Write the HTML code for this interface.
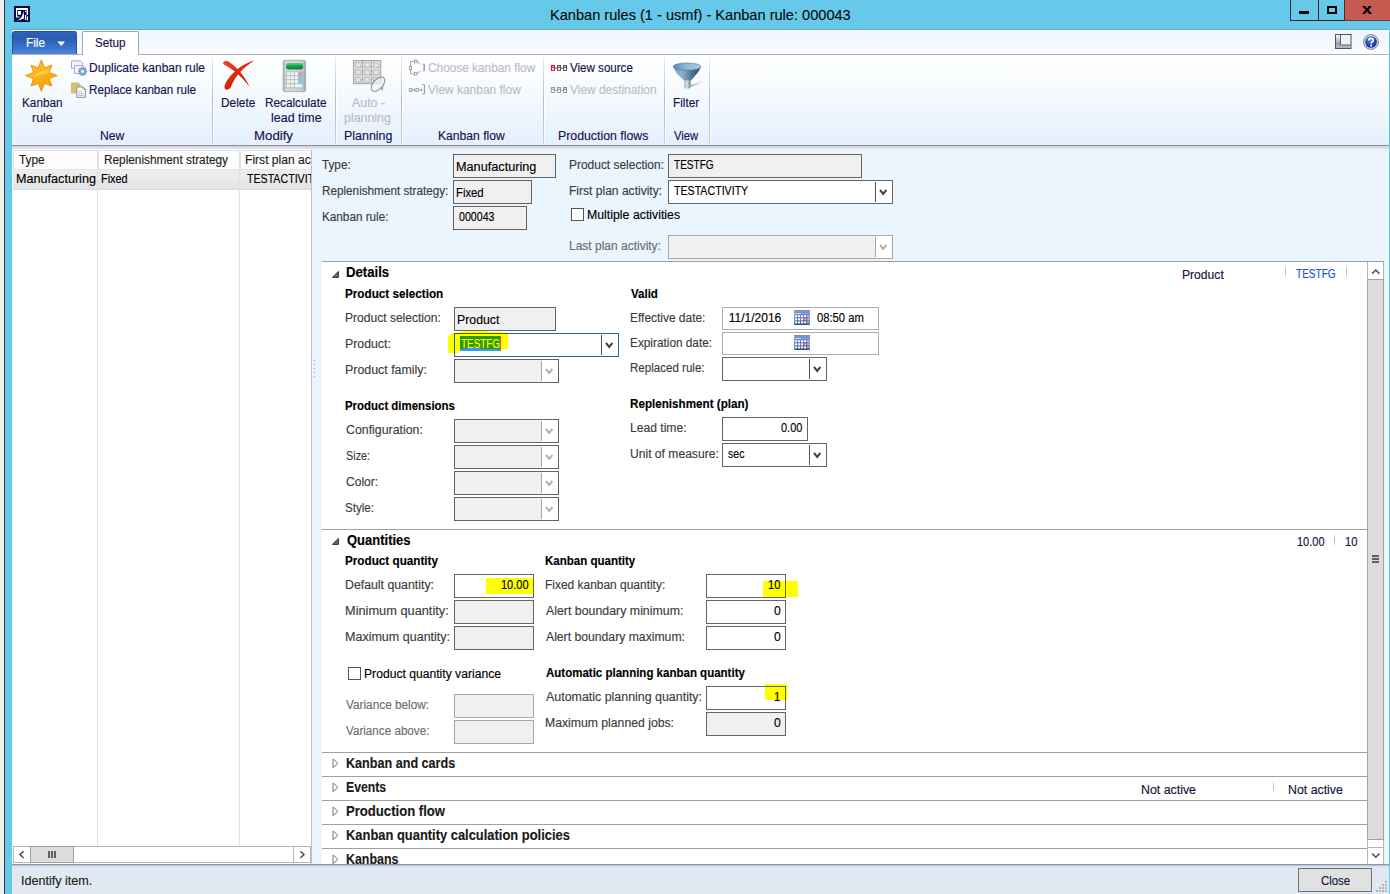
<!DOCTYPE html>
<html><head><meta charset="utf-8"><title>Kanban rules</title><style>html,body{margin:0;padding:0;}body{width:1390px;height:894px;overflow:hidden;position:relative;background:#67c9ea;font-family:"Liberation Sans",sans-serif;}#r{position:absolute;left:0;top:0;width:1390px;height:894px;overflow:hidden;}#r div,#r svg,#r span{position:absolute;}#r span{white-space:nowrap;transform-origin:0 0;line-height:16px;height:16px;-webkit-text-stroke:0.15px currentColor;}</style></head><body><div id="r">
<div style="left:0px;top:0px;width:4px;height:894px;background:#eeeeee;"></div>
<div style="left:4px;top:0px;width:1px;height:894px;background:#3a3a3a;"></div>
<div style="left:5px;top:0px;width:1385px;height:894px;background:#67c9ea;"></div>
<div style="left:1290px;top:0px;width:29px;height:21px;box-sizing:border-box;border:1px solid #2b2b2b;border-top:none;"></div>
<div style="left:1318px;top:0px;width:27px;height:21px;box-sizing:border-box;border:1px solid #2b2b2b;border-top:none;"></div>
<div style="left:1345px;top:0px;width:45px;height:21px;background:#c55a50;"></div>
<div style="left:1345px;top:20px;width:45px;height:1px;background:#703832;"></div>
<div style="left:1344px;top:0px;width:1px;height:21px;background:#4a2a28;"></div>
<div style="left:1299px;top:11px;width:10px;height:3px;background:#000;"></div>
<div style="left:1327px;top:6px;width:10px;height:8px;box-sizing:border-box;border:2px solid #000;"></div>
<svg style="left:14px;top:6px" width="16" height="16" viewBox="0 0 16 16">
<rect width="16" height="16" fill="#000a46"/>
<path d="M2 2 H14 V9 H12.6 V4 H3.2 V10.4 H5.4 V11.6 H2 Z" fill="#fff"/>
<rect x="4" y="5" width="3" height="3.8" fill="#fff"/>
<path d="M2.8 14.6 C6 13.6 8.8 10.5 9.6 4.8 L10.2 12.6 C8 13 5 14.6 2.8 14.6 Z" fill="#fff"/>
<rect x="11" y="9" width="1.2" height="5" fill="#fff"/><rect x="12.9" y="10.4" width="1.1" height="4" fill="#fff"/>
<rect x="11" y="4.8" width="1.2" height="1.2" fill="#fff"/>
</svg>
<div style="left:12px;top:29px;width:1377px;height:1px;background:#6ea6c6;"></div>
<div style="left:12px;top:30px;width:1377px;height:25px;background:linear-gradient(#f8fbff 0px,#edf5fd 2px,#f2f8fe 50%,#fcfdff 100%);"></div>
<div style="left:12px;top:54px;width:1377px;height:1px;background:#a9b0b9;"></div>
<div style="left:12px;top:31px;width:65px;height:23px;background:linear-gradient(#2d62b8 0%,#2a5db2 30%,#3a72cc 70%,#4c88de 100%);border-radius:3px 3px 0 0;box-sizing:border-box;border:1px solid #2450a0;border-bottom:none;"></div>
<svg style="left:57px;top:41px" width="9" height="6" viewBox="0 0 9 6"><path d="M0.4 0.6 H8 L4.2 5 Z" fill="#fff"/></svg>
<div style="left:82px;top:31px;width:57px;height:25px;background:#fff;box-sizing:border-box;border:1px solid #9fa6af;border-bottom:none;border-radius:2px 2px 0 0;"></div>
<svg style="left:1335px;top:34px" width="17" height="16" viewBox="0 0 17 16">
<defs><linearGradient id="lg1" x1="0" x2="0" y1="0" y2="1"><stop offset="0" stop-color="#fafafa"/><stop offset="1" stop-color="#8e949c"/></linearGradient></defs>
<rect x="0.5" y="0.5" width="15.5" height="14" fill="#f0f0f0" stroke="#4d5560"/>
<rect x="1" y="1" width="4" height="10" fill="url(#lg1)"/>
<rect x="1" y="11" width="14.5" height="3" fill="#aeb4bc"/>
<path d="M5.5 1 V11 H16" stroke="#5a626c" fill="none"/>
</svg>
<svg style="left:1363px;top:34px" width="16" height="16" viewBox="0 0 18 18">
<defs><radialGradient id="hg" cx="0.4" cy="0.3" r="0.8"><stop offset="0" stop-color="#5a8ae6"/><stop offset="0.6" stop-color="#1f44b0"/><stop offset="1" stop-color="#12307e"/></radialGradient></defs>
<circle cx="9" cy="9" r="8.3" fill="#e4e4e4" stroke="#7a7a7a" stroke-width="1.1"/>
<circle cx="9" cy="9" r="6.6" fill="url(#hg)"/>
<path d="M6.6 7.2 C6.6 4.2 11.6 4.2 11.6 7 C11.6 8.8 9.2 8.8 9.2 10.8" stroke="#fff" stroke-width="2" fill="none"/>
<rect x="8.2" y="12" width="2" height="2" fill="#fff"/>
</svg>
<div style="left:12px;top:55px;width:1377px;height:91px;background:linear-gradient(#ffffff 0%,#f7fbfe 35%,#ebf4fd 75%,#e3f0fc 100%);"></div>
<div style="left:12px;top:145px;width:1377px;height:1px;background:#8a9199;"></div>
<div style="left:12px;top:146px;width:1377px;height:3px;background:linear-gradient(#cdd1d6,#e4e9ef);"></div>
<div style="left:12px;top:149px;width:1377px;height:1px;background:#ebf5fe;"></div>
<div style="left:212px;top:57px;width:1px;height:87px;background:linear-gradient(rgba(190,198,208,0.3),#b4bcc7 50%,rgba(180,188,199,0.6));"></div>
<div style="left:213px;top:57px;width:1px;height:87px;background:rgba(255,255,255,0.7);"></div>
<div style="left:335px;top:57px;width:1px;height:87px;background:linear-gradient(rgba(190,198,208,0.3),#b4bcc7 50%,rgba(180,188,199,0.6));"></div>
<div style="left:336px;top:57px;width:1px;height:87px;background:rgba(255,255,255,0.7);"></div>
<div style="left:401px;top:57px;width:1px;height:87px;background:linear-gradient(rgba(190,198,208,0.3),#b4bcc7 50%,rgba(180,188,199,0.6));"></div>
<div style="left:402px;top:57px;width:1px;height:87px;background:rgba(255,255,255,0.7);"></div>
<div style="left:543px;top:57px;width:1px;height:87px;background:linear-gradient(rgba(190,198,208,0.3),#b4bcc7 50%,rgba(180,188,199,0.6));"></div>
<div style="left:544px;top:57px;width:1px;height:87px;background:rgba(255,255,255,0.7);"></div>
<div style="left:664px;top:57px;width:1px;height:87px;background:linear-gradient(rgba(190,198,208,0.3),#b4bcc7 50%,rgba(180,188,199,0.6));"></div>
<div style="left:665px;top:57px;width:1px;height:87px;background:rgba(255,255,255,0.7);"></div>
<div style="left:709px;top:57px;width:1px;height:87px;background:linear-gradient(rgba(190,198,208,0.3),#b4bcc7 50%,rgba(180,188,199,0.6));"></div>
<div style="left:710px;top:57px;width:1px;height:87px;background:rgba(255,255,255,0.7);"></div>
<svg style="left:24px;top:58px" width="36" height="36" viewBox="24 58 36 36">
<defs><linearGradient id="sg" x1="0.2" y1="0" x2="0.8" y2="1"><stop offset="0" stop-color="#ffc52e"/><stop offset="0.45" stop-color="#fdb416"/><stop offset="1" stop-color="#f49a04"/></linearGradient>
<linearGradient id="sh" x1="0" y1="1" x2="1" y2="0"><stop offset="0" stop-color="#fff" stop-opacity="0"/><stop offset="0.5" stop-color="#fff36a" stop-opacity="0.55"/><stop offset="1" stop-color="#fff" stop-opacity="0"/></linearGradient></defs>
<path d="M38.19 67.84 Q39.29 65.21 41.40 59.80 Q43.51 65.21 44.61 67.84 Q47.26 66.76 51.87 65.13 Q50.24 69.74 49.16 72.39 Q51.79 73.49 57.20 75.60 Q51.79 77.71 49.16 78.81 Q50.24 81.46 51.87 86.07 Q47.26 84.44 44.61 83.36 Q43.51 85.99 41.40 91.40 Q39.29 85.99 38.19 83.36 Q35.54 84.44 30.93 86.07 Q32.56 81.46 33.64 78.81 Q31.01 77.71 25.60 75.60 Q31.01 73.49 33.64 72.39 Q32.56 69.74 30.93 65.13 Q35.54 66.76 38.19 67.84 Z" fill="url(#sg)" stroke="#dc8e0a" stroke-width="0.9" stroke-linejoin="round"/>
<path d="M33.4 76 C37 72.6 44 69.6 50.4 68.4 C50.8 70 50.6 71.4 50 72.6 C44 73.4 38 75.6 33.8 78.4 Z" fill="url(#sh)"/>
</svg>
<svg style="left:70px;top:59px" width="18" height="18" viewBox="70 59 18 18">
<path d="M71.5 60.9 H80.4 L82.6 63 V68.3 H71.5 Z" fill="#f3f5fb" stroke="#aaa8d6"/>
<path d="M74.6 65.6 H83 L85 67.6 V73.5 H74.6 Z" fill="#f6f8fc" stroke="#aaa8d6"/>
<circle cx="82.6" cy="71.4" r="3.7" fill="#86abcc" stroke="#6f97bd" stroke-width="1.8" stroke-dasharray="1.2 1.0"/>
<circle cx="82.6" cy="71.4" r="1.4" fill="#f4f8fc"/>
</svg>
<svg style="left:70px;top:81px" width="18" height="18" viewBox="70 81 18 18">
<defs><pattern id="hp" width="2.4" height="2.4" patternUnits="userSpaceOnUse" patternTransform="rotate(-45)"><rect width="2.4" height="2.4" fill="#b9b69a"/><rect width="2.4" height="1.1" fill="#e6d24e"/></pattern></defs>
<path d="M71 82.4 H78.4 L80.6 84.6 V93.6 H71 Z" fill="url(#hp)"/>
<path d="M76.8 86.9 H83 L85.4 89.3 V97.3 H76.8 Z" fill="#fff" stroke="#8c8c8c"/>
<path d="M83 86.9 V89.3 H85.4" fill="none" stroke="#8c8c8c" stroke-width="0.8"/>
<path d="M78.3 91.4 H81.8 M78.3 93.4 H83.8 M78.3 95.4 H83.8" stroke="#9fb2cc" stroke-width="0.9"/>
</svg>
<svg style="left:221px;top:59px" width="36" height="33" viewBox="221 59 36 33">
<defs><linearGradient id="rx" x1="0" x2="1" y1="0" y2="1"><stop offset="0" stop-color="#ee4a30"/><stop offset="0.5" stop-color="#d82408"/><stop offset="1" stop-color="#c41c04"/></linearGradient></defs>
<path d="M223.2 62.6 C224.6 60.6 227.6 60.8 229.6 62.2 C237.4 67.6 245 76.8 249.9 87.2 C243.4 78.6 235.6 71 226 65.8 C224 64.8 222.6 63.8 223.2 62.6 Z" fill="url(#rx)"/>
<path d="M254.4 60.6 C243 63.6 232.6 72 227.4 80 C224.6 84.2 223.6 88 225.6 89.4 C228.2 90.8 230.6 88.4 231.6 85.6 C234.6 77.4 243 67.6 254.4 60.6 Z" fill="url(#rx)"/>
</svg>
<svg style="left:282px;top:59px" width="25" height="34" viewBox="282 59 25 34"><defs><linearGradient id="cb" x1="0" x2="1"><stop offset="0" stop-color="#aab2b8"/><stop offset="0.15" stop-color="#d8dde0"/><stop offset="0.85" stop-color="#c9cfd3"/><stop offset="1" stop-color="#98a1a8"/></linearGradient><linearGradient id="cg" x1="0" x2="0" y1="0" y2="1"><stop offset="0" stop-color="#5fd28a"/><stop offset="0.5" stop-color="#12a04a"/><stop offset="1" stop-color="#0a8038"/></linearGradient></defs><rect x="283.2" y="60.3" width="22.4" height="31.3" rx="1.6" fill="url(#cb)" stroke="#98a0a6" stroke-width="0.8"/><rect x="286.1" y="63" width="16.9" height="6.4" rx="1.8" fill="url(#cg)"/><rect x="285.8" y="71.4" width="17.4" height="17" fill="#b4bcc2"/><rect x="286.7" y="72.2" width="3.2" height="3" fill="#f4f4f4"/><rect x="290.7" y="72.2" width="3.2" height="3" fill="#f4f4f4"/><rect x="294.7" y="72.2" width="3.2" height="3" fill="#f4f4f4"/><rect x="298.8" y="72.2" width="3.2" height="3" fill="#f08a9a"/><rect x="286.7" y="76.2" width="3.2" height="3" fill="#f4f4f4"/><rect x="290.7" y="76.2" width="3.2" height="3" fill="#f4f4f4"/><rect x="294.7" y="76.2" width="3.2" height="3" fill="#f4f4f4"/><rect x="298.8" y="76.2" width="3.2" height="3" fill="#6ed0ee"/><rect x="286.7" y="80.2" width="3.2" height="3" fill="#f4f4f4"/><rect x="290.7" y="80.2" width="3.2" height="3" fill="#f4f4f4"/><rect x="294.7" y="80.2" width="3.2" height="3" fill="#f4f4f4"/><rect x="298.8" y="80.2" width="3.2" height="3" fill="#6ed0ee"/><rect x="286.7" y="84.3" width="3.2" height="3" fill="#f4f4f4"/><rect x="290.7" y="84.3" width="3.2" height="3" fill="#f4f4f4"/><rect x="294.7" y="84.3" width="7.3" height="3" fill="#f4f4f4"/></svg>
<svg style="left:351px;top:58px" width="36" height="36" viewBox="351 58 36 36"><rect x="353.4" y="60.5" width="27.4" height="23.2" fill="#dcdcdc" stroke="#a4a4a4"/><path d="M362.4 61 V83" stroke="#a0a0a0" stroke-dasharray="3 1.2"/><path d="M371.4 61 V83" stroke="#a0a0a0" stroke-dasharray="3 1.2"/><path d="M355.6 62.6 H358.8 C360.8 63.2 361.0 65.0 361.0 67.2 H355.6 Z" fill="#e6e6e6" stroke="#b0b0b0" stroke-width="0.8"/><path d="M364.6 62.6 H367.8 C369.8 63.2 370.0 65.0 370.0 67.2 H364.6 Z" fill="#e6e6e6" stroke="#b0b0b0" stroke-width="0.8"/><path d="M373.6 62.6 H376.8 C378.8 63.2 379.0 65.0 379.0 67.2 H373.6 Z" fill="#e6e6e6" stroke="#b0b0b0" stroke-width="0.8"/><path d="M355.6 70.0 H358.8 C360.8 70.6 361.0 72.4 361.0 74.6 H355.6 Z" fill="#e6e6e6" stroke="#b0b0b0" stroke-width="0.8"/><path d="M364.6 70.0 H367.8 C369.8 70.6 370.0 72.4 370.0 74.6 H364.6 Z" fill="#e6e6e6" stroke="#b0b0b0" stroke-width="0.8"/><path d="M373.6 70.0 H376.8 C378.8 70.6 379.0 72.4 379.0 74.6 H373.6 Z" fill="#e6e6e6" stroke="#b0b0b0" stroke-width="0.8"/><path d="M355.6 77.4 H358.8 C360.8 78.0 361.0 79.80000000000001 361.0 82.0 H355.6 Z" fill="#e6e6e6" stroke="#b0b0b0" stroke-width="0.8"/><path d="M364.6 77.4 H367.8 C369.8 78.0 370.0 79.80000000000001 370.0 82.0 H364.6 Z" fill="#e6e6e6" stroke="#b0b0b0" stroke-width="0.8"/><path d="M373.6 77.4 H376.8 C378.8 78.0 379.0 79.80000000000001 379.0 82.0 H373.6 Z" fill="#e6e6e6" stroke="#b0b0b0" stroke-width="0.8"/><ellipse cx="378" cy="84.2" rx="8.6" ry="4.8" transform="rotate(-48 378 84.2)" fill="#f2f2f2" fill-opacity="0.7" stroke="#9a9a9a" stroke-width="1.2"/><path d="M379 88.4 L383.4 85.6 L383 90.6 Z" fill="#a8a8a8"/></svg>
<svg style="left:408px;top:59px" width="18" height="18" viewBox="408 59 18 18" fill="none" stroke="#9c9c9c" stroke-width="0.9">
<path d="M414 61.2 H410.6 V66.4 M410.6 69.6 V73.8 H414 M417.6 61.2 L420.4 64.4 M417.6 73.8 L420.4 70.6"/>
<rect x="414.4" y="60.2" width="2.6" height="2.6"/><rect x="414.4" y="72.4" width="2.6" height="2.6"/><rect x="409.4" y="66.4" width="2.2" height="3.2"/>
<path d="M422.6 64.2 H424.4 V70.8 H422.6 M423 66.4 H424.4 M423 68.6 H424.4" stroke="#8a8a8a"/>
</svg>
<svg style="left:408px;top:83px" width="18" height="12" viewBox="408 83 18 12" fill="none" stroke="#9c9c9c" stroke-width="0.9">
<rect x="409.4" y="88.6" width="2.4" height="2.8"/><rect x="416" y="88.6" width="2.4" height="2.8"/>
<path d="M411.8 90 H416 M418.4 90 H422.6 M414.4 88.8 L415.8 90 L414.4 91.2 M421 88.8 L422.4 90 L421 91.2"/>
<path d="M422.6 84.6 H424.4 V93.8 H422.6" stroke="#8a8a8a"/>
</svg>
<svg style="left:550px;top:64.1px" width="18" height="8" viewBox="550 64.1 18 8"><path d="M555 68.3 H563.5" stroke="#585858" stroke-width="0.9"/><rect x="550.9" y="65.1" width="4" height="5.9" fill="#e8001c"/><rect x="551.9" y="68.0" width="2" height="2" fill="#fff"/><rect x="551.9" y="66.1" width="2" height="0.9" fill="#fff" opacity="0.75"/><rect x="557" y="65.1" width="4" height="5.9" fill="#585858"/><rect x="558" y="68.0" width="2" height="2" fill="#fff"/><rect x="558" y="66.1" width="2" height="0.9" fill="#fff" opacity="0.75"/><rect x="563" y="65.1" width="4" height="5.9" fill="#585858"/><rect x="564" y="68.0" width="2" height="2" fill="#fff"/><rect x="564" y="66.1" width="2" height="0.9" fill="#fff" opacity="0.75"/></svg>
<svg style="left:550px;top:86.1px" width="18" height="8" viewBox="550 86.1 18 8"><path d="M555 90.3 H563.5" stroke="#9a9a9a" stroke-width="0.9"/><rect x="550.9" y="87.1" width="4" height="5.9" fill="#9a9a9a"/><rect x="551.9" y="90.0" width="2" height="2" fill="#fff"/><rect x="551.9" y="88.1" width="2" height="0.9" fill="#fff" opacity="0.75"/><rect x="557" y="87.1" width="4" height="5.9" fill="#9a9a9a"/><rect x="558" y="90.0" width="2" height="2" fill="#fff"/><rect x="558" y="88.1" width="2" height="0.9" fill="#fff" opacity="0.75"/><rect x="563" y="87.1" width="4" height="5.9" fill="#8a8a8a"/><rect x="564" y="90.0" width="2" height="2" fill="#fff"/><rect x="564" y="88.1" width="2" height="0.9" fill="#fff" opacity="0.75"/></svg>
<svg style="left:671px;top:61px" width="36" height="30" viewBox="671 61 36 30">
<defs><linearGradient id="fc" x1="0" x2="1"><stop offset="0" stop-color="#7fa8c8"/><stop offset="0.35" stop-color="#86aecc"/><stop offset="0.7" stop-color="#4f6f88"/><stop offset="1" stop-color="#3a5266"/></linearGradient>
<linearGradient id="ft" x1="0" x2="1"><stop offset="0" stop-color="#5e88aa"/><stop offset="0.5" stop-color="#8dbbdc"/><stop offset="1" stop-color="#a8cfea"/></linearGradient>
<linearGradient id="fs" x1="0" x2="1"><stop offset="0" stop-color="#88aac4"/><stop offset="0.4" stop-color="#dbe8f2"/><stop offset="1" stop-color="#5d7f98"/></linearGradient>
<linearGradient id="fsh" x1="0" x2="1"><stop offset="0" stop-color="#8a8f96" stop-opacity="0.7"/><stop offset="1" stop-color="#8a8f96" stop-opacity="0"/></linearGradient></defs>
<path d="M691 85 L703 80.4 L703 82.6 L691 87 Z" fill="url(#fsh)"/>
<path d="M673.2 66.8 C675 73 681 77 684.2 80.8 H690.8 C694 77 699.4 72 700.8 66.8 Z" fill="url(#fc)"/>
<ellipse cx="687" cy="66.6" rx="13.8" ry="3.6" fill="url(#ft)" stroke="#5a7a94" stroke-width="0.7"/>
<path d="M684.4 80.6 H690.6 V87.8 C689 89 686 89 684.4 87.8 Z" fill="url(#fs)"/>
</svg>
<div style="left:12px;top:150px;width:1377px;height:715px;background:#ebf5fe;"></div>
<div style="left:12px;top:149px;width:299px;height:715px;background:#fff;"></div>
<div style="left:13px;top:150px;width:85px;height:20px;background:linear-gradient(#ffffff,#fbfbfb);box-sizing:border-box;border:1px solid #e0e0e0;"></div>
<div style="left:98px;top:150px;width:142px;height:20px;background:linear-gradient(#ffffff,#fbfbfb);box-sizing:border-box;border:1px solid #e0e0e0;"></div>
<div style="left:240px;top:150px;width:72px;height:20px;background:linear-gradient(#ffffff,#fbfbfb);box-sizing:border-box;border:1px solid #e0e0e0;"></div>
<div style="left:13px;top:169px;width:298px;height:21px;background:linear-gradient(#d9d9d9 0px,#eeeeee 1px,#e9e9e9 60%,#e3e3e3 100%);box-sizing:border-box;border-bottom:1px solid #d2dceb;"></div>
<div style="left:97px;top:170px;width:1px;height:676px;background:#dce5f3;"></div>
<div style="left:239px;top:170px;width:1px;height:676px;background:#dce5f3;"></div>
<div style="left:311px;top:150px;width:1px;height:714px;background:#b4c3d9;"></div>
<div style="left:13px;top:846px;width:298px;height:17px;background:#fff;box-sizing:border-box;border:1px solid #b6b6b6;"></div>
<div style="left:30px;top:846px;width:44px;height:17px;background:#dcdcdc;box-sizing:border-box;border:1px solid #a2a2a2;"></div>
<div style="left:48px;top:851px;width:2px;height:7px;background:#606060;"></div>
<div style="left:51px;top:851px;width:2px;height:7px;background:#606060;"></div>
<div style="left:54px;top:851px;width:2px;height:7px;background:#606060;"></div>
<div style="left:293px;top:847px;width:1px;height:15px;background:#b6b6b6;"></div>
<svg style="left:17px;top:849px" width="10" height="12" viewBox="0 0 10 12"><path d="M6.6 2.2 L3 5.6 L6.6 9" fill="none" stroke="#505050" stroke-width="1.5"/></svg>
<svg style="left:297px;top:849px" width="10" height="12" viewBox="0 0 10 12"><path d="M3.4 2.2 L7 5.6 L3.4 9" fill="none" stroke="#505050" stroke-width="1.5"/></svg>
<span style="left:19.40px;top:152px;font-size:12px;color:#1e1e1e;transform:scaleX(0.9885);">Type</span>
<span style="left:103.52px;top:152px;font-size:12px;color:#1e1e1e;transform:scaleX(0.9832);">Replenishment strategy</span>
<span style="left:245.39px;top:152px;font-size:12px;color:#1e1e1e;transform:scaleX(1.0068);">First plan activity</span>
<span style="left:15.55px;top:171px;font-size:12px;color:#000000;transform:scaleX(1.0514);">Manufacturing</span>
<span style="left:100.69px;top:171px;font-size:12px;color:#000000;transform:scaleX(0.9071);">Fixed</span>
<span style="left:246.90px;top:171px;font-size:12px;color:#000000;transform:scaleX(0.8857);">TESTACTIVITY</span>
<div style="left:311px;top:150px;width:1px;height:714px;background:#b4c3d9;"></div>
<div style="left:312px;top:150px;width:1077px;height:714px;background:#ebf5fe;"></div>
<div style="left:314px;top:360px;width:1px;height:1px;background:#8d9db5;"></div>
<div style="left:314px;top:364px;width:1px;height:1px;background:#8d9db5;"></div>
<div style="left:314px;top:368px;width:1px;height:1px;background:#8d9db5;"></div>
<div style="left:314px;top:372px;width:1px;height:1px;background:#8d9db5;"></div>
<div style="left:314px;top:376px;width:1px;height:1px;background:#8d9db5;"></div>
<div style="left:453px;top:154px;width:103px;height:24px;background:#f0f0f0;border:1px solid #646464;box-sizing:border-box;"></div>
<div style="left:453px;top:180px;width:79px;height:24px;background:#f0f0f0;border:1px solid #646464;box-sizing:border-box;"></div>
<div style="left:453px;top:206px;width:74px;height:24px;background:#f0f0f0;border:1px solid #646464;box-sizing:border-box;"></div>
<div style="left:668px;top:154px;width:194px;height:24px;background:#f0f0f0;border:1px solid #646464;box-sizing:border-box;"></div>
<div style="left:668px;top:180px;width:225px;height:24px;background:#ffffff;border:1px solid #646464;box-sizing:border-box;"></div>
<div style="left:875px;top:182px;width:1px;height:20px;background:#555555;"></div>
<svg style="left:878.4px;top:188.25px" width="10.4" height="7.9" viewBox="-2 -2 10.4 7.9"><path d="M0 0 L3.2 3.9 L6.4 0" fill="none" stroke="#404040" stroke-width="2" stroke-linejoin="miter"/></svg>
<div style="left:571px;top:208px;width:13px;height:13px;background:#fff;box-sizing:border-box;border:1px solid #555;"></div>
<div style="left:668px;top:235px;width:225px;height:24px;background:#f0f0f0;border:1px solid #a8a8a8;box-sizing:border-box;"></div>
<div style="left:875px;top:236px;width:17px;height:22px;background:#ffffff;"></div>
<div style="left:875px;top:237px;width:1px;height:20px;background:#a2a8ae;"></div>
<svg style="left:878.4px;top:243.25px" width="10.4" height="7.9" viewBox="-2 -2 10.4 7.9"><path d="M0 0 L3.2 3.9 L6.4 0" fill="none" stroke="#b2b2b2" stroke-width="2" stroke-linejoin="miter"/></svg>
<div style="left:322px;top:262px;width:1045px;height:602px;background:#fff;"></div>
<div style="left:322px;top:261px;width:1045px;height:1px;background:#a0a0a0;"></div>
<div style="left:322px;top:529px;width:1045px;height:1px;background:#a0a0a0;"></div>
<div style="left:322px;top:752px;width:1045px;height:1px;background:#a0a0a0;"></div>
<div style="left:322px;top:776px;width:1045px;height:1px;background:#a0a0a0;"></div>
<div style="left:322px;top:800px;width:1045px;height:1px;background:#a0a0a0;"></div>
<div style="left:322px;top:824px;width:1045px;height:1px;background:#a0a0a0;"></div>
<div style="left:322px;top:848px;width:1045px;height:1px;background:#a0a0a0;"></div>
<div style="left:1367px;top:261px;width:17px;height:1px;background:#a0a0a0;"></div>
<svg style="left:331.8px;top:270.6px" width="8" height="7" viewBox="0 0 8 7"><path d="M6.4 0.4 V6.4 H0.4 Z" fill="#6a6a6a" stroke="#262626" stroke-width="0.9"/></svg>
<svg style="left:331.8px;top:538.4px" width="8" height="7" viewBox="0 0 8 7"><path d="M6.4 0.4 V6.4 H0.4 Z" fill="#6a6a6a" stroke="#262626" stroke-width="0.9"/></svg>
<svg style="left:331.8px;top:758.4px" width="8" height="11" viewBox="0 0 8 11"><path d="M1 1 L6 5.3 L1 9.6 Z" fill="#fff" stroke="#767676" stroke-width="1"/></svg>
<svg style="left:331.8px;top:782.4px" width="8" height="11" viewBox="0 0 8 11"><path d="M1 1 L6 5.3 L1 9.6 Z" fill="#fff" stroke="#767676" stroke-width="1"/></svg>
<svg style="left:331.8px;top:806.4px" width="8" height="11" viewBox="0 0 8 11"><path d="M1 1 L6 5.3 L1 9.6 Z" fill="#fff" stroke="#767676" stroke-width="1"/></svg>
<svg style="left:331.8px;top:830.4px" width="8" height="11" viewBox="0 0 8 11"><path d="M1 1 L6 5.3 L1 9.6 Z" fill="#fff" stroke="#767676" stroke-width="1"/></svg>
<svg style="left:331.8px;top:854.4px" width="8" height="11" viewBox="0 0 8 11"><path d="M1 1 L6 5.3 L1 9.6 Z" fill="#fff" stroke="#767676" stroke-width="1"/></svg>
<div style="left:454px;top:307px;width:102px;height:24px;background:#f0f0f0;border:1px solid #646464;box-sizing:border-box;"></div>
<div style="left:454px;top:333px;width:165px;height:24px;background:#ffffff;border:1px solid #2b6496;box-sizing:border-box;"></div>
<div style="left:601px;top:335px;width:1px;height:20px;background:#555555;"></div>
<svg style="left:604.4px;top:341.25px" width="10.4" height="7.9" viewBox="-2 -2 10.4 7.9"><path d="M0 0 L3.2 3.9 L6.4 0" fill="none" stroke="#404040" stroke-width="2" stroke-linejoin="miter"/></svg>
<div style="left:463px;top:331px;width:24px;height:1px;background:#ffff00;"></div>
<div style="left:459px;top:332px;width:43px;height:1px;background:#ffff00;"></div>
<div style="left:451px;top:333px;width:3px;height:1px;background:#ffff00;"></div>
<div style="left:450px;top:334px;width:4px;height:2px;background:#ffff00;"></div>
<div style="left:448px;top:336px;width:6px;height:17px;background:#ffff00;"></div>
<div style="left:455px;top:334px;width:53px;height:15px;background:#ffff00;"></div>
<div style="left:455px;top:349px;width:5px;height:2px;background:#ffff00;"></div>
<div style="left:455px;top:351px;width:3px;height:2px;background:#ffff00;"></div>
<div style="left:454px;top:333px;width:1px;height:20px;background:#2c6400;"></div>
<div style="left:455px;top:333px;width:53px;height:1px;background:#2c6400;"></div>
<div style="left:460px;top:336px;width:40px;height:15px;background:#2f9a00;"></div>
<div style="left:460px;top:349px;width:6px;height:2px;background:#3399ff;"></div>
<div style="left:466px;top:348px;width:15px;height:3px;background:#3399ff;"></div>
<div style="left:481px;top:349px;width:19px;height:2px;background:#3399ff;"></div>
<div style="left:500px;top:336px;width:1px;height:15px;background:#e06000;"></div>
<div style="left:454px;top:359px;width:105px;height:24px;background:#f0f0f0;border:1px solid #646464;box-sizing:border-box;"></div>
<div style="left:541px;top:360px;width:17px;height:22px;background:#ffffff;"></div>
<div style="left:541px;top:361px;width:1px;height:20px;background:#a2a8ae;"></div>
<svg style="left:544.4px;top:367.25px" width="10.4" height="7.9" viewBox="-2 -2 10.4 7.9"><path d="M0 0 L3.2 3.9 L6.4 0" fill="none" stroke="#b2b2b2" stroke-width="2" stroke-linejoin="miter"/></svg>
<div style="left:454px;top:419px;width:105px;height:24px;background:#f0f0f0;border:1px solid #646464;box-sizing:border-box;"></div>
<div style="left:541px;top:420px;width:17px;height:22px;background:#ffffff;"></div>
<div style="left:541px;top:421px;width:1px;height:20px;background:#a2a8ae;"></div>
<svg style="left:544.4px;top:427.25px" width="10.4" height="7.9" viewBox="-2 -2 10.4 7.9"><path d="M0 0 L3.2 3.9 L6.4 0" fill="none" stroke="#b2b2b2" stroke-width="2" stroke-linejoin="miter"/></svg>
<div style="left:454px;top:445px;width:105px;height:24px;background:#f0f0f0;border:1px solid #646464;box-sizing:border-box;"></div>
<div style="left:541px;top:446px;width:17px;height:22px;background:#ffffff;"></div>
<div style="left:541px;top:447px;width:1px;height:20px;background:#a2a8ae;"></div>
<svg style="left:544.4px;top:453.25px" width="10.4" height="7.9" viewBox="-2 -2 10.4 7.9"><path d="M0 0 L3.2 3.9 L6.4 0" fill="none" stroke="#b2b2b2" stroke-width="2" stroke-linejoin="miter"/></svg>
<div style="left:454px;top:471px;width:105px;height:24px;background:#f0f0f0;border:1px solid #646464;box-sizing:border-box;"></div>
<div style="left:541px;top:472px;width:17px;height:22px;background:#ffffff;"></div>
<div style="left:541px;top:473px;width:1px;height:20px;background:#a2a8ae;"></div>
<svg style="left:544.4px;top:479.25px" width="10.4" height="7.9" viewBox="-2 -2 10.4 7.9"><path d="M0 0 L3.2 3.9 L6.4 0" fill="none" stroke="#b2b2b2" stroke-width="2" stroke-linejoin="miter"/></svg>
<div style="left:454px;top:497px;width:105px;height:24px;background:#f0f0f0;border:1px solid #646464;box-sizing:border-box;"></div>
<div style="left:541px;top:498px;width:17px;height:22px;background:#ffffff;"></div>
<div style="left:541px;top:499px;width:1px;height:20px;background:#a2a8ae;"></div>
<svg style="left:544.4px;top:505.25px" width="10.4" height="7.9" viewBox="-2 -2 10.4 7.9"><path d="M0 0 L3.2 3.9 L6.4 0" fill="none" stroke="#b2b2b2" stroke-width="2" stroke-linejoin="miter"/></svg>
<div style="left:722px;top:307px;width:157px;height:23px;background:#ffffff;border:1px solid #abadb3;box-sizing:border-box;"></div>
<div style="left:722px;top:332px;width:157px;height:23px;background:#ffffff;border:1px solid #abadb3;box-sizing:border-box;"></div>
<div style="left:722px;top:357px;width:105px;height:24px;background:#ffffff;border:1px solid #646464;box-sizing:border-box;"></div>
<div style="left:809px;top:359px;width:1px;height:20px;background:#555555;"></div>
<svg style="left:812.4px;top:365.25px" width="10.4" height="7.9" viewBox="-2 -2 10.4 7.9"><path d="M0 0 L3.2 3.9 L6.4 0" fill="none" stroke="#404040" stroke-width="2" stroke-linejoin="miter"/></svg>
<div style="left:722px;top:417px;width:86px;height:24px;background:#ffffff;border:1px solid #646464;box-sizing:border-box;"></div>
<div style="left:722px;top:443px;width:105px;height:24px;background:#ffffff;border:1px solid #646464;box-sizing:border-box;"></div>
<div style="left:809px;top:445px;width:1px;height:20px;background:#555555;"></div>
<svg style="left:812.4px;top:451.25px" width="10.4" height="7.9" viewBox="-2 -2 10.4 7.9"><path d="M0 0 L3.2 3.9 L6.4 0" fill="none" stroke="#404040" stroke-width="2" stroke-linejoin="miter"/></svg>
<svg style="left:794px;top:309.6px" width="16" height="16" viewBox="0 0 16 16"><defs><linearGradient id="cal" x1="0" x2="0" y1="0" y2="1"><stop offset="0" stop-color="#6c92e4"/><stop offset="0.7" stop-color="#4f72bc"/><stop offset="1" stop-color="#2f4a86"/></linearGradient></defs><rect x="0.2" y="1.4" width="15.6" height="13.6" fill="url(#cal)"/><path d="M0.6 0.8 H15.6" stroke="#222" stroke-width="1.4" stroke-dasharray="1 1"/><rect x="1" y="3" width="6" height="0.9" fill="#dfe8fb"/><rect x="7.6" y="3" width="7" height="0.9" fill="#8fadea"/><rect x="1.1" y="5.2" width="2" height="2" fill="#fff" opacity="1"/><rect x="4.1" y="5.2" width="2" height="2" fill="#fff" opacity="1"/><rect x="7.1" y="5.2" width="2" height="2" fill="#fff" opacity="1"/><rect x="10.1" y="5.2" width="2" height="2" fill="#fff" opacity="1"/><rect x="13.1" y="5.2" width="2" height="2" fill="#fff" opacity="0.55"/><rect x="1.1" y="8.3" width="2" height="2" fill="#fff" opacity="1"/><rect x="4.1" y="8.3" width="2" height="2" fill="#fff" opacity="1"/><rect x="7.1" y="8.3" width="2" height="2" fill="#fff" opacity="1"/><rect x="9.6" y="7.800000000000001" width="3.2" height="3.2" fill="#f04a10"/><rect x="10.6" y="8.8" width="1.2" height="1.2" fill="#fff"/><rect x="13.1" y="8.3" width="2" height="2" fill="#fff" opacity="0.55"/><rect x="1.1" y="11.4" width="2" height="2" fill="#fff" opacity="1"/><rect x="4.1" y="11.4" width="2" height="2" fill="#fff" opacity="1"/><rect x="7.1" y="11.4" width="2" height="2" fill="#fff" opacity="1"/><rect x="10.1" y="11.4" width="2" height="2" fill="#fff" opacity="1"/><rect x="13.1" y="11.4" width="2" height="2" fill="#fff" opacity="0.55"/></svg>
<svg style="left:794px;top:334.6px" width="16" height="16" viewBox="0 0 16 16"><defs><linearGradient id="cal" x1="0" x2="0" y1="0" y2="1"><stop offset="0" stop-color="#6c92e4"/><stop offset="0.7" stop-color="#4f72bc"/><stop offset="1" stop-color="#2f4a86"/></linearGradient></defs><rect x="0.2" y="1.4" width="15.6" height="13.6" fill="url(#cal)"/><path d="M0.6 0.8 H15.6" stroke="#222" stroke-width="1.4" stroke-dasharray="1 1"/><rect x="1" y="3" width="6" height="0.9" fill="#dfe8fb"/><rect x="7.6" y="3" width="7" height="0.9" fill="#8fadea"/><rect x="1.1" y="5.2" width="2" height="2" fill="#fff" opacity="1"/><rect x="4.1" y="5.2" width="2" height="2" fill="#fff" opacity="1"/><rect x="7.1" y="5.2" width="2" height="2" fill="#fff" opacity="1"/><rect x="10.1" y="5.2" width="2" height="2" fill="#fff" opacity="1"/><rect x="13.1" y="5.2" width="2" height="2" fill="#fff" opacity="0.55"/><rect x="1.1" y="8.3" width="2" height="2" fill="#fff" opacity="1"/><rect x="4.1" y="8.3" width="2" height="2" fill="#fff" opacity="1"/><rect x="7.1" y="8.3" width="2" height="2" fill="#fff" opacity="1"/><rect x="9.6" y="7.800000000000001" width="3.2" height="3.2" fill="#f04a10"/><rect x="10.6" y="8.8" width="1.2" height="1.2" fill="#fff"/><rect x="13.1" y="8.3" width="2" height="2" fill="#fff" opacity="0.55"/><rect x="1.1" y="11.4" width="2" height="2" fill="#fff" opacity="1"/><rect x="4.1" y="11.4" width="2" height="2" fill="#fff" opacity="1"/><rect x="7.1" y="11.4" width="2" height="2" fill="#fff" opacity="1"/><rect x="10.1" y="11.4" width="2" height="2" fill="#fff" opacity="1"/><rect x="13.1" y="11.4" width="2" height="2" fill="#fff" opacity="0.55"/></svg>
<div style="left:1285px;top:264px;width:1px;height:15px;background:linear-gradient(rgba(170,170,170,0),#b0b0b0 50%,rgba(170,170,170,0));"></div>
<div style="left:1346px;top:264px;width:1px;height:15px;background:linear-gradient(rgba(170,170,170,0),#b0b0b0 50%,rgba(170,170,170,0));"></div>
<div style="left:1334px;top:532px;width:1px;height:15px;background:linear-gradient(rgba(170,170,170,0),#b0b0b0 50%,rgba(170,170,170,0));"></div>
<div style="left:1273px;top:780px;width:1px;height:13px;background:linear-gradient(rgba(170,170,170,0),#b0b0b0 50%,rgba(170,170,170,0));"></div>
<div style="left:454px;top:574px;width:80px;height:24px;background:#ffffff;border:1px solid #646464;box-sizing:border-box;"></div>
<div style="left:486px;top:578px;width:47px;height:15.600000000000023px;background:#ffff00;"></div>
<div style="left:454px;top:600px;width:80px;height:24px;background:#f0f0f0;border:1px solid #646464;box-sizing:border-box;"></div>
<div style="left:454px;top:626px;width:80px;height:24px;background:#f0f0f0;border:1px solid #646464;box-sizing:border-box;"></div>
<div style="left:348px;top:667px;width:13px;height:13px;background:#fff;box-sizing:border-box;border:1px solid #555;"></div>
<div style="left:454px;top:694px;width:80px;height:24px;background:#f0f0f0;border:1px solid #a8a8a8;box-sizing:border-box;"></div>
<div style="left:454px;top:720px;width:80px;height:24px;background:#f0f0f0;border:1px solid #a8a8a8;box-sizing:border-box;"></div>
<div style="left:706px;top:574px;width:80px;height:24px;background:#ffffff;border:1px solid #646464;box-sizing:border-box;"></div>
<div style="left:763px;top:581.4px;width:35.39999999999998px;height:15.399999999999977px;background:#ffff00;"></div>
<div style="left:785px;top:581.4px;width:1px;height:15.399999999999977px;background:#6a6a00;"></div>
<div style="left:706px;top:600px;width:80px;height:24px;background:#ffffff;border:1px solid #646464;box-sizing:border-box;"></div>
<div style="left:706px;top:626px;width:80px;height:24px;background:#ffffff;border:1px solid #646464;box-sizing:border-box;"></div>
<div style="left:706px;top:686px;width:80px;height:24px;background:#ffffff;border:1px solid #646464;box-sizing:border-box;"></div>
<div style="left:765px;top:684.2px;width:22.200000000000045px;height:15.599999999999909px;background:#ffff00;"></div>
<div style="left:765px;top:686px;width:21px;height:1px;background:#6a6a00;"></div>
<div style="left:785px;top:686px;width:1px;height:13.799999999999955px;background:#6a6a00;"></div>
<div style="left:706px;top:712px;width:80px;height:24px;background:#f0f0f0;border:1px solid #646464;box-sizing:border-box;"></div>
<div style="left:1367px;top:262px;width:17px;height:602px;background:#fff;box-sizing:border-box;border-left:1px solid #b6b6b6;border-right:1px solid #b6b6b6;"></div>
<div style="left:1367px;top:279px;width:17px;height:561px;background:#dcdcdc;box-sizing:border-box;border:1px solid #a2a2a2;"></div>
<div style="left:1367px;top:847px;width:17px;height:1px;background:#b6b6b6;"></div>
<div style="left:1372px;top:555.4px;width:7.400000000000091px;height:1.7000000000000455px;background:#606060;"></div>
<div style="left:1372px;top:558.4px;width:7.400000000000091px;height:1.7000000000000455px;background:#606060;"></div>
<div style="left:1372px;top:561.4px;width:7.400000000000091px;height:1.7000000000000455px;background:#606060;"></div>
<svg style="left:1370px;top:266px" width="12" height="10" viewBox="0 0 12 10"><path d="M2.2 7.6 L5.8 4 L9.4 7.6" fill="none" stroke="#505050" stroke-width="1.5"/></svg>
<svg style="left:1370px;top:851px" width="12" height="10" viewBox="0 0 12 10"><path d="M2.2 2.6 L5.8 6.2 L9.4 2.6" fill="none" stroke="#505050" stroke-width="1.5"/></svg>
<span style="left:549.93px;top:7px;font-size:15px;color:#0a0a0a;transform:scaleX(0.9721);">Kanban rules (1 - usmf) - Kanban rule: 000043</span>
<span style="left:1362.40px;top:1px;font-size:15px;color:#000000;font-weight:bold;transform:scaleX(1.1750);">x</span>
<span style="left:26.32px;top:35px;font-size:12px;color:#ffffff;transform:scaleX(0.9833);">File</span>
<span style="left:95.32px;top:35px;font-size:12px;color:#17124f;transform:scaleX(0.9767);">Setup</span>
<span style="left:21.52px;top:95px;font-size:12px;color:#17124f;transform:scaleX(0.9800);">Kanban</span>
<span style="left:31.56px;top:110px;font-size:12px;color:#17124f;transform:scaleX(1.0368);">rule</span>
<span style="left:89.00px;top:60px;font-size:12px;color:#17124f;transform:scaleX(0.9991);">Duplicate kanban rule</span>
<span style="left:89.03px;top:82px;font-size:12px;color:#17124f;transform:scaleX(0.9725);">Replace kanban rule</span>
<span style="left:99.79px;top:128px;font-size:12px;color:#17124f;transform:scaleX(1.0130);">New</span>
<span style="left:221.41px;top:95px;font-size:12px;color:#17124f;transform:scaleX(0.9879);">Delete</span>
<span style="left:265.22px;top:95px;font-size:12px;color:#17124f;transform:scaleX(0.9803);">Recalculate</span>
<span style="left:271.16px;top:110px;font-size:12px;color:#17124f;transform:scaleX(1.0383);">lead time</span>
<span style="left:254.20px;top:128px;font-size:12px;color:#17124f;transform:scaleX(1.1029);">Modify</span>
<span style="left:352.00px;top:95px;font-size:12px;color:#bebaca;transform:scaleX(1.0312);">Auto -</span>
<span style="left:344.47px;top:110px;font-size:12px;color:#bebaca;transform:scaleX(1.0341);">planning</span>
<span style="left:343.96px;top:128px;font-size:12px;color:#17124f;transform:scaleX(1.0378);">Planning</span>
<span style="left:428.30px;top:60px;font-size:12px;color:#bebaca;transform:scaleX(0.9862);">Choose kanban flow</span>
<span style="left:428.30px;top:82px;font-size:12px;color:#bebaca;transform:scaleX(0.9957);">View kanban flow</span>
<span style="left:437.99px;top:128px;font-size:12px;color:#17124f;transform:scaleX(1.0108);">Kanban flow</span>
<span style="left:570.30px;top:60px;font-size:12px;color:#17124f;transform:scaleX(0.9646);">View source</span>
<span style="left:570.30px;top:82px;font-size:12px;color:#bebaca;transform:scaleX(0.9931);">View destination</span>
<span style="left:558.27px;top:128px;font-size:12px;color:#17124f;transform:scaleX(1.0264);">Production flows</span>
<span style="left:673.42px;top:95px;font-size:12px;color:#17124f;transform:scaleX(0.9846);">Filter</span>
<span style="left:674.40px;top:128px;font-size:12px;color:#17124f;transform:scaleX(0.9385);">View</span>
<span style="left:322.00px;top:157px;font-size:12px;color:#3c3c3c;transform:scaleX(0.9759);">Type:</span>
<span style="left:322.02px;top:183px;font-size:12px;color:#3c3c3c;transform:scaleX(0.9766);">Replenishment strategy:</span>
<span style="left:322.02px;top:209px;font-size:12px;color:#3c3c3c;transform:scaleX(0.9773);">Kanban rule:</span>
<span style="left:456.34px;top:159px;font-size:12px;color:#000000;transform:scaleX(1.0568);">Manufacturing</span>
<span style="left:456.46px;top:185px;font-size:12px;color:#000000;transform:scaleX(0.9393);">Fixed</span>
<span style="left:459.30px;top:209px;font-size:12px;color:#000000;transform:scaleX(0.8850);">000043</span>
<span style="left:568.60px;top:157px;font-size:12px;color:#3c3c3c;transform:scaleX(0.9957);">Product selection:</span>
<span style="left:568.60px;top:183px;font-size:12px;color:#3c3c3c;transform:scaleX(1.0044);">First plan activity:</span>
<span style="left:568.60px;top:238px;font-size:12px;color:#6e6e6e;transform:scaleX(0.9989);">Last plan activity:</span>
<span style="left:674.40px;top:157px;font-size:12px;color:#000000;transform:scaleX(0.8362);">TESTFG</span>
<span style="left:674.40px;top:183px;font-size:12px;color:#000000;transform:scaleX(0.8857);">TESTACTIVITY</span>
<span style="left:587.47px;top:207px;font-size:12px;color:#000000;transform:scaleX(1.0267);">Multiple activities</span>
<span style="left:345.76px;top:264px;font-size:14px;color:#000000;font-weight:bold;transform:scaleX(0.9400);">Details</span>
<span style="left:345.42px;top:286px;font-size:12px;color:#000000;font-weight:bold;transform:scaleX(0.9758);">Product selection</span>
<span style="left:345.40px;top:310px;font-size:12px;color:#3c3c3c;transform:scaleX(1.0043);">Product selection:</span>
<span style="left:345.37px;top:336px;font-size:12px;color:#3c3c3c;transform:scaleX(1.0256);">Product:</span>
<span style="left:345.37px;top:362px;font-size:12px;color:#3c3c3c;transform:scaleX(1.0333);">Product family:</span>
<span style="left:456.98px;top:312px;font-size:12px;color:#000000;transform:scaleX(1.0244);">Product</span>
<span style="left:460.80px;top:336px;font-size:12px;color:#ffff00;transform:scaleX(0.8255);">TESTFG</span>
<span style="left:345.45px;top:398px;font-size:12px;color:#000000;font-weight:bold;transform:scaleX(0.9526);">Product dimensions</span>
<span style="left:346.40px;top:422px;font-size:12px;color:#3c3c3c;transform:scaleX(1.0284);">Configuration:</span>
<span style="left:345.50px;top:448px;font-size:12px;color:#3c3c3c;transform:scaleX(0.9040);">Size:</span>
<span style="left:346.40px;top:474px;font-size:12px;color:#3c3c3c;transform:scaleX(1.0032);">Color:</span>
<span style="left:345.43px;top:500px;font-size:12px;color:#3c3c3c;transform:scaleX(0.9679);">Style:</span>
<span style="left:631.00px;top:286px;font-size:12px;color:#000000;font-weight:bold;transform:scaleX(0.9607);">Valid</span>
<span style="left:630.01px;top:310px;font-size:12px;color:#3c3c3c;transform:scaleX(0.9946);">Effective date:</span>
<span style="left:630.02px;top:335px;font-size:12px;color:#3c3c3c;transform:scaleX(0.9841);">Expiration date:</span>
<span style="left:630.04px;top:360px;font-size:12px;color:#3c3c3c;transform:scaleX(0.9632);">Replaced rule:</span>
<span style="left:728.80px;top:310px;font-size:12px;color:#000000;">11/1/2016</span>
<span style="left:817.00px;top:310px;font-size:12px;color:#000000;transform:scaleX(0.9360);">08:50 am</span>
<span style="left:630.03px;top:396px;font-size:12px;color:#000000;font-weight:bold;transform:scaleX(0.9711);">Replenishment (plan)</span>
<span style="left:629.99px;top:420px;font-size:12px;color:#3c3c3c;transform:scaleX(1.0093);">Lead time:</span>
<span style="left:629.99px;top:446px;font-size:12px;color:#3c3c3c;transform:scaleX(1.0081);">Unit of measure:</span>
<span style="left:781.20px;top:420px;font-size:12px;color:#000000;transform:scaleX(0.9174);">0.00</span>
<span style="left:728.20px;top:446px;font-size:12px;color:#000000;transform:scaleX(0.8789);">sec</span>
<span style="left:1182.49px;top:267px;font-size:12px;color:#14143c;transform:scaleX(1.0098);">Product</span>
<span style="left:1296.40px;top:266px;font-size:12px;color:#1a55d8;transform:scaleX(0.8383);">TESTFG</span>
<span style="left:346.70px;top:532px;font-size:14px;color:#000000;font-weight:bold;transform:scaleX(0.9279);">Quantities</span>
<span style="left:345.22px;top:553px;font-size:12px;color:#000000;font-weight:bold;transform:scaleX(0.9758);">Product quantity</span>
<span style="left:345.17px;top:577px;font-size:12px;color:#3c3c3c;transform:scaleX(1.0259);">Default quantity:</span>
<span style="left:345.13px;top:603px;font-size:12px;color:#3c3c3c;transform:scaleX(1.0656);">Minimum quantity:</span>
<span style="left:345.16px;top:629px;font-size:12px;color:#3c3c3c;transform:scaleX(1.0434);">Maximum quantity:</span>
<span style="left:500.98px;top:577px;font-size:12px;color:#000000;transform:scaleX(0.9172);">10.00</span>
<span style="left:364.29px;top:666px;font-size:12px;color:#000000;transform:scaleX(1.0119);">Product quantity variance</span>
<span style="left:346.20px;top:697px;font-size:12px;color:#6e6e6e;transform:scaleX(0.9833);">Variance below:</span>
<span style="left:346.20px;top:723px;font-size:12px;color:#6e6e6e;transform:scaleX(0.9718);">Variance above:</span>
<span style="left:545.44px;top:553px;font-size:12px;color:#000000;font-weight:bold;transform:scaleX(0.9602);">Kanban quantity</span>
<span style="left:545.40px;top:577px;font-size:12px;color:#3c3c3c;transform:scaleX(0.9958);">Fixed kanban quantity:</span>
<span style="left:546.40px;top:603px;font-size:12px;color:#3c3c3c;transform:scaleX(1.0301);">Alert boundary minimum:</span>
<span style="left:546.40px;top:629px;font-size:12px;color:#3c3c3c;transform:scaleX(1.0162);">Alert boundary maximum:</span>
<span style="left:768.08px;top:577px;font-size:12px;color:#000000;transform:scaleX(0.9250);">10</span>
<span style="left:774.00px;top:603px;font-size:12px;color:#000000;transform:scaleX(1.0167);">0</span>
<span style="left:774.00px;top:629px;font-size:12px;color:#000000;transform:scaleX(1.0167);">0</span>
<span style="left:546.40px;top:665px;font-size:12px;color:#000000;font-weight:bold;transform:scaleX(0.9591);">Automatic planning kanban quantity</span>
<span style="left:546.40px;top:689px;font-size:12px;color:#3c3c3c;transform:scaleX(1.0347);">Automatic planning quantity:</span>
<span style="left:545.38px;top:715px;font-size:12px;color:#3c3c3c;transform:scaleX(1.0176);">Maximum planned jobs:</span>
<span style="left:774.06px;top:689px;font-size:12px;color:#000000;transform:scaleX(0.9400);">1</span>
<span style="left:774.00px;top:715px;font-size:12px;color:#000000;transform:scaleX(1.0167);">0</span>
<span style="left:1296.68px;top:534px;font-size:12px;color:#14143c;transform:scaleX(0.9172);">10.00</span>
<span style="left:1345.07px;top:534px;font-size:12px;color:#14143c;transform:scaleX(0.9333);">10</span>
<span style="left:345.70px;top:755px;font-size:14px;color:#1a1a1a;font-weight:bold;transform:scaleX(0.9000);">Kanban and cards</span>
<span style="left:345.73px;top:779px;font-size:14px;color:#1a1a1a;font-weight:bold;transform:scaleX(0.8733);">Events</span>
<span style="left:345.66px;top:803px;font-size:14px;color:#1a1a1a;font-weight:bold;transform:scaleX(0.9362);">Production flow</span>
<span style="left:345.68px;top:827px;font-size:14px;color:#1a1a1a;font-weight:bold;transform:scaleX(0.9223);">Kanban quantity calculation policies</span>
<span style="left:345.71px;top:851px;font-size:14px;color:#1a1a1a;font-weight:bold;transform:scaleX(0.8862);">Kanbans</span>
<span style="left:1141.17px;top:782px;font-size:12px;color:#14143c;transform:scaleX(1.0308);">Not active</span>
<span style="left:1288.37px;top:782px;font-size:12px;color:#14143c;transform:scaleX(1.0288);">Not active</span>
<div style="left:12px;top:864px;width:1377px;height:30px;background:#e1e8f1;"></div>
<div style="left:12px;top:864px;width:1377px;height:1px;background:#8e97a5;"></div>
<div style="left:12px;top:865px;width:1377px;height:1px;background:#b9c6d9;"></div>
<div style="left:12px;top:866px;width:1377px;height:1px;background:#d7e0ec;"></div>
<div style="left:1298px;top:868px;width:74px;height:24px;background:#e1e1e1;box-sizing:border-box;border:1px solid #707070;"></div>
<div style="left:1385px;top:881px;width:2px;height:2px;background:#b4b4b4;"></div>
<div style="left:1382px;top:884px;width:2px;height:2px;background:#b4b4b4;"></div>
<div style="left:1385px;top:884px;width:2px;height:2px;background:#b4b4b4;"></div>
<div style="left:1379px;top:887px;width:2px;height:2px;background:#b4b4b4;"></div>
<div style="left:1382px;top:887px;width:2px;height:2px;background:#b4b4b4;"></div>
<div style="left:1385px;top:887px;width:2px;height:2px;background:#b4b4b4;"></div>
<div style="left:1376px;top:890px;width:2px;height:2px;background:#b4b4b4;"></div>
<div style="left:1379px;top:890px;width:2px;height:2px;background:#b4b4b4;"></div>
<div style="left:1382px;top:890px;width:2px;height:2px;background:#b4b4b4;"></div>
<div style="left:1385px;top:890px;width:2px;height:2px;background:#b4b4b4;"></div>
<span style="left:21.25px;top:873px;font-size:12px;color:#1e1e1e;transform:scaleX(1.0470);">Identify item.</span>
<span style="left:1321.00px;top:873px;font-size:12px;color:#14143c;transform:scaleX(0.9433);">Close</span>
</div></body></html>
